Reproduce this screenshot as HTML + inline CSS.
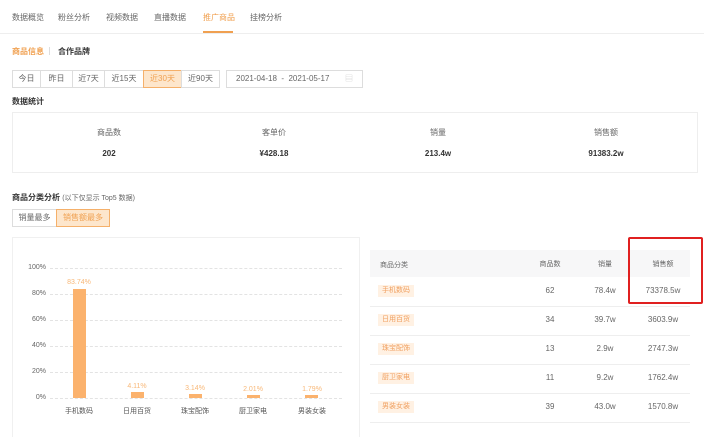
<!DOCTYPE html><html><head><meta charset="utf-8"><style>
*{margin:0;padding:0;box-sizing:border-box}
body{width:704px;height:429px;overflow:hidden;background:#fff;font-family:"Liberation Sans","Noto Sans CJK SC",sans-serif;font-size:8px;color:#333;position:relative}
.a{position:absolute;white-space:nowrap}
.tab{color:#666;top:12px}
.btn{position:absolute;top:70px;height:18px;border:1px solid #ddd;color:#666;text-align:center;line-height:16px;background:#fff}
.on{background:#fde6cc;border-color:#f5b06a;color:#f0a050}
.c{transform:translateX(-50%)}
.grid{position:absolute;left:50px;width:292px;border-top:1px dashed #e3e3e3}
.yl{position:absolute;left:26px;width:20px;text-align:right;color:#666;font-size:7px}
.bar{position:absolute;width:13px;background:#fbb26d;bottom:31px}
.bl{position:absolute;color:#f8b878;font-size:7px;transform:translateX(-50%)}
.xl{position:absolute;top:406px;color:#555;font-size:7px;transform:translateX(-50%)}
.tag{position:absolute;left:378px;background:#fff1e3;color:#f0a060;padding:0 4px;height:12px;line-height:12px;font-size:7px}
.num{position:absolute;color:#666;transform:translateX(-50%)}
.row{position:absolute;left:370px;width:320px;border-top:1px solid #eee}
</style></head><body>
<div class="a tab" style="left:12px">数据概览</div>
<div class="a tab" style="left:58px">粉丝分析</div>
<div class="a tab" style="left:106px">视频数据</div>
<div class="a tab" style="left:154px">直播数据</div>
<div class="a tab" style="left:203px;color:#f0a050">推广商品</div>
<div class="a tab" style="left:250px">挂榜分析</div>
<div class="a" style="left:0;top:33px;width:704px;border-top:1px solid #eee"></div>
<div class="a" style="left:203px;top:31px;width:30px;height:2px;background:#f0a050"></div>
<div class="a" style="left:12px;top:46px;color:#f0a050;font-weight:bold">商品信息</div>
<div class="a" style="left:49px;top:47px;height:8px;border-left:1px solid #ddd"></div>
<div class="a" style="left:58px;top:46px;font-weight:bold">合作品牌</div>
<div class="btn" style="left:12px;width:29px">今日</div>
<div class="btn" style="left:40px;width:33px">昨日</div>
<div class="btn" style="left:72px;width:33px">近7天</div>
<div class="btn" style="left:104px;width:40px">近15天</div>
<div class="btn on" style="left:143px;width:39px">近30天</div>
<div class="btn" style="left:181px;width:39px">近90天</div>
<div class="btn" style="left:226px;width:137px;text-align:left;padding-left:9px">2021-04-18 &nbsp;- &nbsp;2021-05-17<span style="position:absolute;left:118px;color:#ccc">▤</span></div>
<div class="a" style="left:12px;top:96px;font-weight:bold">数据统计</div>
<div class="a" style="left:12px;top:112px;width:686px;height:61px;border:1px solid #eee"></div>
<div class="a c" style="left:109px;top:127px;color:#666">商品数</div>
<div class="a c" style="left:274px;top:127px;color:#666">客单价</div>
<div class="a c" style="left:438px;top:127px;color:#666">销量</div>
<div class="a c" style="left:606px;top:127px;color:#666">销售额</div>
<div class="a c" style="left:109px;top:149px;font-weight:bold">202</div>
<div class="a c" style="left:274px;top:149px;font-weight:bold">¥428.18</div>
<div class="a c" style="left:438px;top:149px;font-weight:bold">213.4w</div>
<div class="a c" style="left:606px;top:149px;font-weight:bold">91383.2w</div>
<div class="a" style="left:12px;top:192px"><b>商品分类分析</b> <span style="color:#666;font-size:7px">(以下仅显示 Top5 数据)</span></div>
<div class="btn" style="left:12px;top:209px;width:45px">销量最多</div>
<div class="btn on" style="left:56px;top:209px;width:54px">销售额最多</div>
<div class="a" style="left:12px;top:237px;width:348px;height:200px;border:1px solid #f0f0f0;border-bottom:none"></div>
<div class="grid" style="top:268px"></div><div class="grid" style="top:294px"></div><div class="grid" style="top:320px"></div><div class="grid" style="top:346px"></div><div class="grid" style="top:372px"></div><div class="grid" style="top:398px"></div>
<div class="yl" style="top:264px">100%</div><div class="yl" style="top:290px">80%</div><div class="yl" style="top:316px">60%</div><div class="yl" style="top:342px">40%</div><div class="yl" style="top:368px">20%</div><div class="yl" style="top:394px">0%</div>
<div class="bar" style="left:73px;height:109px"></div>
<div class="bar" style="left:131px;height:6px"></div>
<div class="bar" style="left:189px;height:4px"></div>
<div class="bar" style="left:247px;height:3px"></div>
<div class="bar" style="left:305px;height:3px"></div>
<div class="bl" style="left:79px;top:279px">83.74%</div>
<div class="bl" style="left:137px;top:383px">4.11%</div>
<div class="bl" style="left:195px;top:385px">3.14%</div>
<div class="bl" style="left:253px;top:386px">2.01%</div>
<div class="bl" style="left:312px;top:386px">1.79%</div>
<div class="xl" style="left:79px">手机数码</div><div class="xl" style="left:137px">日用百货</div><div class="xl" style="left:195px">珠宝配饰</div><div class="xl" style="left:253px">厨卫家电</div><div class="xl" style="left:312px">男装女装</div>
<div class="a" style="left:370px;top:250px;width:320px;height:27px;background:#f7f7f8"></div>
<div class="a" style="left:380px;top:260px;color:#666;font-size:7px">商品分类</div>
<div class="num" style="left:550px;top:259px;font-size:7px">商品数</div>
<div class="num" style="left:605px;top:259px;font-size:7px">销量</div>
<div class="num" style="left:663px;top:259px;font-size:7px">销售额</div>
<div class="row" style="top:306px"></div><div class="row" style="top:335px"></div><div class="row" style="top:364px"></div><div class="row" style="top:393px"></div><div class="row" style="top:422px"></div>
<div class="tag" style="top:285px">手机数码</div><div class="num" style="left:550px;top:286px">62</div><div class="num" style="left:605px;top:286px">78.4w</div><div class="num" style="left:663px;top:286px">73378.5w</div>
<div class="tag" style="top:314px">日用百货</div><div class="num" style="left:550px;top:315px">34</div><div class="num" style="left:605px;top:315px">39.7w</div><div class="num" style="left:663px;top:315px">3603.9w</div>
<div class="tag" style="top:343px">珠宝配饰</div><div class="num" style="left:550px;top:344px">13</div><div class="num" style="left:605px;top:344px">2.9w</div><div class="num" style="left:663px;top:344px">2747.3w</div>
<div class="tag" style="top:372px">厨卫家电</div><div class="num" style="left:550px;top:373px">11</div><div class="num" style="left:605px;top:373px">9.2w</div><div class="num" style="left:663px;top:373px">1762.4w</div>
<div class="tag" style="top:401px">男装女装</div><div class="num" style="left:550px;top:402px">39</div><div class="num" style="left:605px;top:402px">43.0w</div><div class="num" style="left:663px;top:402px">1570.8w</div>
<div class="a" style="left:628px;top:237px;width:75px;height:67px;border:2px solid #e02020;border-radius:2px"></div>
</body></html>
